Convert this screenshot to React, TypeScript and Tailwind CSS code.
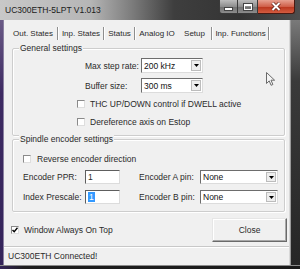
import React from "react";

function Arrow() {
  return (
    <svg width="5" height="3" viewBox="0 0 5 3">
      <path d="M0 0h5L2.5 3z" fill="#000" />
    </svg>
  );
}

function Combo({ value, className }: { value: string; className: string }) {
  return (
    <div
      className={`flex items-stretch bg-white border border-t-[#6d6d6d] border-l-[#6d6d6d] border-r-[#dcdcdc] border-b-[#dcdcdc] ${className}`}
    >
      <span className="flex flex-1 items-center pl-[2px] text-[#111]">{value}</span>
      <span className="m-px flex w-[10px] items-center justify-center border border-[#bcbcbc] bg-[#eeeeee]">
        <Arrow />
      </span>
    </div>
  );
}

function Check({ checked }: { checked?: boolean }) {
  return (
    <span className="flex h-[8px] w-[8px] shrink-0 items-center justify-center border border-t-[#8a8a8a] border-l-[#8a8a8a] border-r-[#dedede] border-b-[#dedede] bg-white">
      {checked && (
        <svg width="6" height="6" viewBox="0 0 6 6">
          <path d="M0.5 3l1.7 1.8L5.5 0.8" stroke="#000" strokeWidth="1.4" fill="none" />
        </svg>
      )}
    </span>
  );
}

function Field({ children }: { children: React.ReactNode }) {
  return (
    <div className="flex h-[14px] w-[35px] items-center border border-t-[#5e5e5e] border-l-[#5e5e5e] border-r-[#dcdcdc] border-b-[#dcdcdc] bg-white pl-[2px]">
      {children}
    </div>
  );
}

function Group({ title, className, children }: { title: string; className: string; children: React.ReactNode }) {
  return (
    <div
      className={`relative ml-[8px] mr-[4px] flex flex-col rounded-[2px] border border-[#cdcdcd] shadow-[inset_1px_1px_0_#ffffff,1px_1px_0_#ffffff] ${className}`}
    >
      <span className="absolute -top-[6px] left-[6px] bg-[#f0f0f0] px-px leading-[10px]">{title}</span>
      {children}
    </div>
  );
}

const tabs = [
  { label: "Out. States", w: "w-[48px]", sep: true },
  { label: "Inp. States", w: "w-[44px]", sep: true },
  { label: "Status", w: "w-[29px]", sep: true },
  { label: "Analog IO", w: "w-[42px]", sep: false },
  { label: "Setup", w: "w-[33px]", sep: true },
  { label: "Inp. Functions", w: "w-[55px]", sep: true },
];

export default function App() {
  return (
    <div className="relative flex h-[269px] w-[300px] flex-col overflow-hidden bg-[#1c1c1c] font-['Liberation_Sans',Arial,sans-serif] text-[8.5px] leading-[10px] text-[#2a2a2a]">
      {/* caption */}
      <div className="flex h-[20px] shrink-0 items-start bg-[linear-gradient(to_right,#c8c8c8_0%,#b6b6b6_30%,#7c7c7c_44%,#3e3e3e_58%,#343434_80%,#4e4e4e_100%)]">
        <span className="pl-[5px] pt-[5px] text-[#1a1a1a]">UC300ETH-5LPT V1.013</span>
        <div className="ml-auto mr-[5px] flex h-[14px]">
          <div className="flex w-[19px] items-end justify-center rounded-bl-[3px] border border-t-0 border-[#3a3a3a] bg-[linear-gradient(#bcbcbc,#8e8e8e_50%,#707070_51%,#8c8c8c)] pb-[3px]">
            <span className="h-[2px] w-[7px] bg-white shadow-[0_0_0_1px_#444]" />
          </div>
          <div className="flex w-[20px] items-center justify-center border border-l-0 border-t-0 border-[#3a3a3a] bg-[linear-gradient(#bcbcbc,#8e8e8e_50%,#707070_51%,#8c8c8c)]">
            <span className="h-[6px] w-[8px] border border-t-2 border-white shadow-[0_0_0_1px_#444]" />
          </div>
          <div className="flex w-[37px] items-center justify-center rounded-br-[3px] border border-l-0 border-t-0 border-[#4a1a12] bg-[linear-gradient(#e6a090,#d0604a_50%,#b8341c_51%,#d45c40)]">
            <svg width="10" height="9" viewBox="0 0 10 9">
              <path d="M1.5 1l7 7M8.5 1l-7 7" stroke="#5a1a10" strokeWidth="3.4" />
              <path d="M1.5 1l7 7M8.5 1l-7 7" stroke="#ffffff" strokeWidth="2" />
            </svg>
          </div>
        </div>
      </div>

      <div className="flex h-[245px] shrink-0">
        <div className="w-[4px] bg-[linear-gradient(#6a5a86,#3d2a62_30%,#34245a)] shadow-[inset_-1px_0_0_#8a80a0]" />

        {/* client */}
        <div className="flex flex-1 flex-col bg-[#f0f0f0]">
          <div className="mt-[7px] flex h-[13px] items-center pl-[5px] text-[8px]">
            {tabs.map((t) => (
              <React.Fragment key={t.label}>
                <span className={`${t.w} text-center whitespace-nowrap`}>{t.label}</span>
                {t.sep && <span className="h-[13px] w-[2px] border-l border-r border-l-[#8e8e8e] border-r-white" />}
              </React.Fragment>
            ))}
          </div>

          <Group title="General settings" className="mt-[8px] h-[88px] pt-[9px]">
            <div className="ml-[72px] flex h-[15px] items-center">
              <span className="w-[56px]">Max step rate:</span>
              <Combo value="200 kHz" className="h-[15px] w-[62px]" />
            </div>
            <div className="ml-[72px] mt-[5px] flex h-[15px] items-center">
              <span className="w-[56px]">Buffer size:</span>
              <Combo value="300 ms" className="h-[15px] w-[62px]" />
            </div>
            <div className="ml-[64px] mt-[6px] flex h-[10px] items-center gap-[5px]">
              <Check />
              <span>THC UP/DOWN control if DWELL active</span>
            </div>
            <div className="ml-[64px] mt-[8px] flex h-[10px] items-center gap-[5px]">
              <Check />
              <span>Dereference axis on Estop</span>
            </div>
          </Group>

          <Group title="Spindle encoder settings" className="mt-[3px] h-[73px] pt-[14px]">
            <div className="ml-[10px] flex h-[10px] items-center gap-[6px]">
              <Check />
              <span>Reverse encoder direction</span>
            </div>
            <div className="ml-[10px] mt-[6px] flex h-[14px] items-center">
              <span className="w-[62px]">Encoder PPR:</span>
              <Field>1</Field>
              <span className="ml-[19px] w-[61px]">Encoder A pin:</span>
              <Combo value="None" className="h-[14px] w-[78px]" />
            </div>
            <div className="ml-[10px] mt-[6px] flex h-[14px] items-center">
              <span className="w-[62px]">Index Prescale:</span>
              <Field>
                <span className="bg-[#3399ff] px-[1px] text-white">1</span>
              </Field>
              <span className="ml-[19px] w-[61px]">Encoder B pin:</span>
              <Combo value="None" className="h-[14px] w-[78px]" />
            </div>
          </Group>

          <div className="mt-[6px] flex h-[24px] items-center">
            <div className="ml-[7px] flex items-center gap-[5px]">
              <Check checked />
              <span>Window Always On Top</span>
            </div>
            <button className="ml-auto mr-[2px] h-[24px] w-[75px] border border-t-[#e6e6e6] border-l-[#e6e6e6] border-b-[#6a6a6a] border-r-[#6a6a6a] bg-[#f0f0f0] text-[8.5px] text-[#2a2a2a] shadow-[inset_-1px_-1px_0_#a8a8a8,inset_1px_1px_0_#ffffff]">
              Close
            </button>
          </div>

          <div className="mt-[4px] flex-1 border-t border-[#c8c8c8] pl-[4px] pt-[4px] shadow-[inset_0_1px_0_#ffffff]">
            UC300ETH Connected!
          </div>
        </div>

        <div className="w-[11px] bg-[linear-gradient(#7a7a7a,#3a3a3a_25%,#262626)] shadow-[inset_1px_0_0_#d8d8d8,inset_2px_0_0_#9a9a9a]" />
      </div>

      <div className="flex-1 bg-[linear-gradient(to_right,#34245a,#1e1e1e_8%,#1a1a1a)] shadow-[inset_0_1px_0_#8a8a8a]" />

      {/* mouse pointer */}
      <svg className="absolute left-[266px] top-[72px]" width="9" height="14" viewBox="0 0 9 14">
        <path d="M0.5 0.5v11l2.7-2.6 1.9 4.4 1.8-.8-1.9-4.3h3.6z" fill="#f4f4f4" stroke="#6a6a6a" strokeWidth="1" />
      </svg>
    </div>
  );
}
